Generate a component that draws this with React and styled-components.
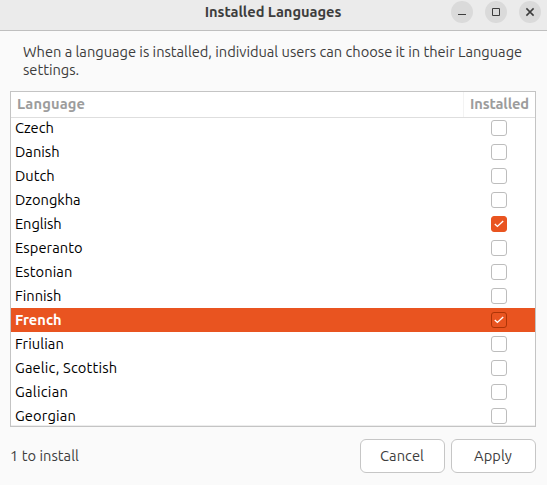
import React from "react";
import styled, { createGlobalStyle, css } from "styled-components";

const GlobalStyle = createGlobalStyle`
  *, *::before, *::after { box-sizing: border-box; }
  body {
    margin: 0;
    background: #fafafa;
    color: #3d3d3d;
    font: 14.667px/18px Ubuntu, "Noto Sans", sans-serif;
    overflow: hidden;
  }
  button { font: inherit; color: inherit; padding: 0; }
`;

const Window = styled.div`
  width: 547px;
  height: 485px;
  display: flex;
  flex-direction: column;
  background: #fafafa;
`;

const TitleBar = styled.header`
  height: 31px;
  flex: none;
  display: grid;
  grid-template-columns: 1fr auto 1fr;
  background: #ebebeb;
  border-bottom: 1px solid #bfbfbf;
`;

const Title = styled.h1`
  grid-column: 2;
  margin: 0;
  font-size: 14.667px;
  line-height: 24px;
  font-weight: 700;
  letter-spacing: -0.04px;
  padding-right: 1px;
`;

const Controls = styled.div`
  grid-column: 3;
  justify-self: end;
  display: flex;
  gap: 12px;
  padding: 1px 6px 0 0;
`;

const ControlButton = styled.button`
  width: 22px;
  height: 22px;
  border: 0;
  border-radius: 50%;
  background: #dadada;
  svg { display: block; }
`;

const Description = styled.p`
  margin: 12px 20px 0 23px;
  height: 36px;
  white-space: nowrap;
  letter-spacing: -0.015px;
`;

const Table = styled.section`
  height: 336px;
  margin: 12px 11px 0 10px;
  display: flex;
  flex-direction: column;
  flex: none;
  border: 1px solid #c4c4c4;
  background: #fff;
`;

const TableHeader = styled.div`
  display: grid;
  grid-template-columns: 1fr 72px;
  height: 26px;
  flex: none;
  border-bottom: 1px solid #dedede;
  color: #9c9c9c;
  font-weight: 700;
  line-height: 24px;
`;

const HeaderCell = styled.div`
  padding-left: 6px;
  letter-spacing: ${(p) => p.$tracking};
  & + & { border-left: 1px solid #f3f3f3; }
`;

const Rows = styled.div`
  flex: 1;
  min-height: 0;
  overflow: hidden;
  border-bottom: 1px solid #ededed;
`;

const Row = styled.div`
  display: grid;
  grid-template-columns: 1fr 72px;
  align-items: center;
  height: 24px;
  padding-left: 4px;
  color: #000;
  line-height: 24px;
  &:first-child { margin-top: -2px; }
  ${(p) => p.$selected && css`
    background: #e95420;
    color: #fff;
    font-weight: 700;
  `}
`;

const Name = styled.span`
  letter-spacing: ${(p) => p.$tracking || "0"};
`;

const Checkbox = styled.span`
  justify-self: center;
  width: 16px;
  height: 16px;
  display: grid;
  place-items: center;
  border: 1px solid ${(p) => (p.$selected ? "#ad3507" : p.$checked ? "#e95420" : "#bdbdbd")};
  border-radius: 3px;
  background: ${(p) => (p.$checked ? "#e95420" : "#fff")};
  svg { display: block; }
`;

const Footer = styled.footer`
  display: flex;
  gap: 6px;
  align-items: center;
  height: 34px;
  margin: 12px 11px 0 10px;
`;

const Status = styled.span`
  flex: 1;
  letter-spacing: 0.03px;
`;

const ActionButton = styled.button`
  width: 85px;
  height: 34px;
  padding-right: 1px;
  border: 1px solid #c6c6c6;
  border-radius: 6px;
  background: #fff;
  letter-spacing: 0.06px;
`;

const languages = [
  { name: "Czech" },
  { name: "Danish" },
  { name: "Dutch" },
  { name: "Dzongkha" },
  { name: "English", tracking: "-0.1px", checked: true },
  { name: "Esperanto", tracking: "0.08px" },
  { name: "Estonian", tracking: "0.08px" },
  { name: "Finnish" },
  { name: "French", checked: true, selected: true },
  { name: "Friulian", tracking: "0.08px" },
  { name: "Gaelic, Scottish", tracking: "0.17px" },
  { name: "Galician", tracking: "0.28px" },
  { name: "Georgian", tracking: "0.15px" },
];

const Tick = () => (
  <svg width="10" height="8" viewBox="0 0 10 8" fill="none" stroke="#fff" strokeWidth="1.4">
    <path d="M0.8 4 3.4 6.4 9.2 1" />
  </svg>
);

const glyphs = {
  Minimize: <path d="M7 13.5h8" />,
  Maximize: <path d="M7.5 7.5h7v7h-7z" />,
  Close: <path d="M7.4 7.4 14.6 14.6M14.6 7.4 7.4 14.6" strokeWidth="1.5" />,
};

export default function App() {
  return (
    <>
      <GlobalStyle />
      <Window>
        <TitleBar>
          <Title>Installed Languages</Title>
          <Controls>
            {Object.entries(glyphs).map(([label, glyph]) => (
              <ControlButton key={label} aria-label={label}>
                <svg width="22" height="22" viewBox="0 0 22 22" fill="none" stroke="#3d3d3d">
                  {glyph}
                </svg>
              </ControlButton>
            ))}
          </Controls>
        </TitleBar>
        <Description>
          When a language is installed, individual users can choose it in their Language
          <br />
          settings.
        </Description>
        <Table>
          <TableHeader>
            <HeaderCell $tracking="0.15px">Language</HeaderCell>
            <HeaderCell $tracking="-0.12px">Installed</HeaderCell>
          </TableHeader>
          <Rows>
            {languages.map(({ name, tracking, checked, selected }) => (
              <Row key={name} $selected={selected}>
                <Name $tracking={tracking}>{name}</Name>
                <Checkbox $checked={checked} $selected={selected}>
                  {checked && <Tick />}
                </Checkbox>
              </Row>
            ))}
          </Rows>
        </Table>
        <Footer>
          <Status>1 to install</Status>
          <ActionButton>Cancel</ActionButton>
          <ActionButton>Apply</ActionButton>
        </Footer>
      </Window>
    </>
  );
}
